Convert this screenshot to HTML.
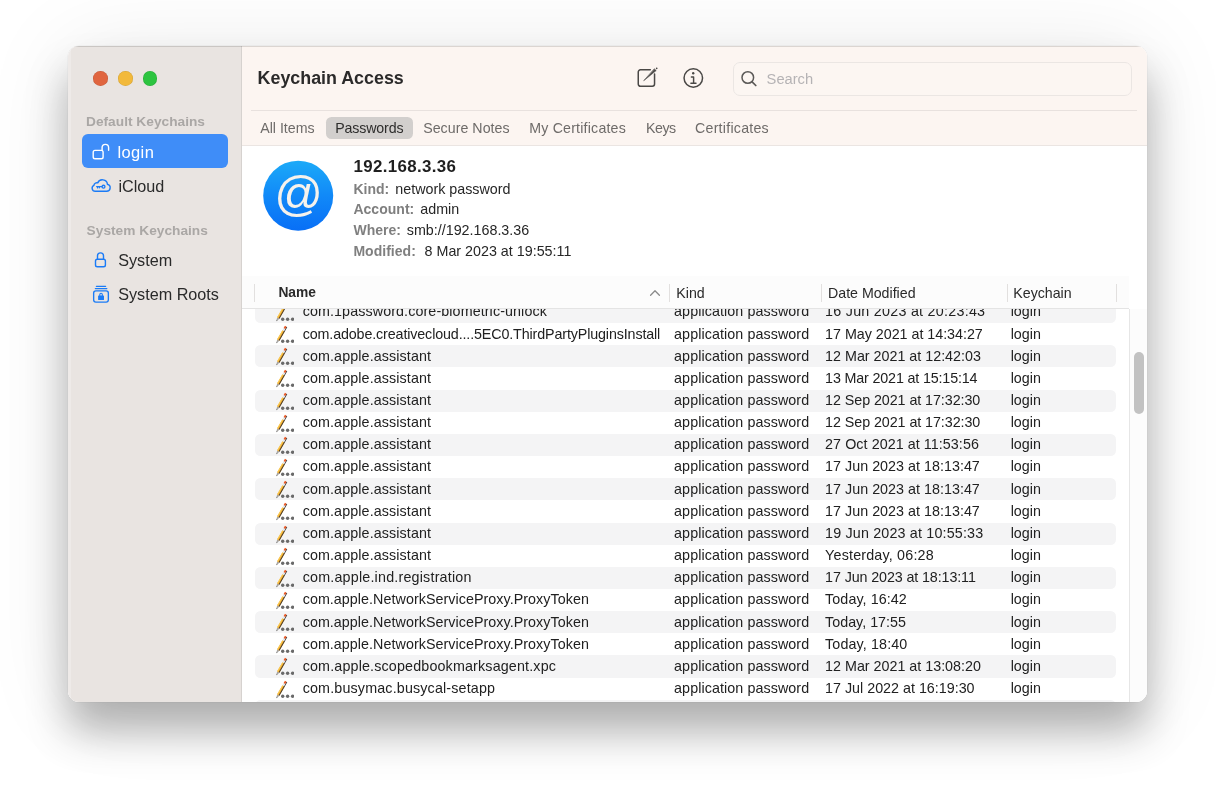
<!DOCTYPE html>
<html lang="en">
<head>
<meta charset="utf-8">
<title>Keychain Access</title>
<style>
html,body{margin:0;padding:0;}
body{width:1216px;height:793px;overflow:hidden;background:#fff;font-family:"Liberation Sans",sans-serif;color:#262626;position:relative;}
.win{position:absolute;left:68px;top:46px;width:1079px;height:656px;border-radius:11px;overflow:hidden;background:#fff;}
.shadow{position:absolute;left:68px;top:46px;width:1079px;height:656px;border-radius:11px;
 box-shadow:0 29px 42px rgba(0,0,0,0.285),0 4px 90px rgba(0,0,0,0.085),0 0 0 0.5px rgba(0,0,0,0.05);}
.pg{will-change:transform;position:absolute;left:-68px;top:-46px;width:1216px;height:793px;}
.abs{position:absolute;white-space:nowrap;line-height:1;}
.sidebar{position:absolute;left:68px;top:46px;width:174px;height:656px;background:#e9e4e1;box-sizing:border-box;border-right:1px solid #d6d2cf;}
.toolbar{position:absolute;left:242px;top:46px;width:905px;height:99.5px;background:#fcf5f1;box-sizing:border-box;border-bottom:1px solid #ebe5e2;}
.tl{position:absolute;width:14.6px;height:14.6px;border-radius:50%;top:71.2px;box-shadow:inset 0 0 0 0.5px rgba(0,0,0,0.12);}
.sechead{font-weight:bold;font-size:13.7px;color:#aaa7a5;letter-spacing:0.02px;}
.sitem{font-size:16.2px;color:#2a2a2a;}
.sel{position:absolute;left:81.5px;top:134px;width:146.5px;height:34px;border-radius:6px;background:#3f8df8;}
.title{font-weight:bold;font-size:17.85px;color:#2b2a2a;}
.tab{font-size:14.2px;color:#6e6b69;}
.pill{position:absolute;left:326.2px;top:117px;width:86.8px;height:21.6px;border-radius:5.5px;background:#d2cfcd;}
.search{position:absolute;left:733px;top:62px;width:399px;height:33.5px;box-sizing:border-box;border:1px solid #ebe6e3;border-radius:7px;background:#fcf6f2;}
.ihead{font-weight:bold;font-size:16.9px;color:#1f1f1f;letter-spacing:0.36px;}
.ilab{font-weight:bold;font-size:14px;color:#7f7f7f;letter-spacing:0.03px;}
.ival{font-size:14.3px;color:#262626;}
.iline{left:353.4px;font-size:14.3px;color:#262626;line-height:18px;height:18px;}
.iline b{display:inline-block;font-weight:bold;font-size:14px;color:#7f7f7f;letter-spacing:0.03px;}
.rows{position:absolute;left:242px;top:309px;width:887px;height:393px;overflow:hidden;}
.rows .in{position:absolute;left:-242px;top:-309px;width:1216px;height:793px;}
.row{position:absolute;left:255px;width:861px;height:22.15px;font-size:14.3px;color:#212121;line-height:22.15px;white-space:nowrap;}
.row.alt{background:#f4f4f5;border-radius:5.5px;}
.row span{position:absolute;top:-0.6px;}
.row .c1{left:47.7px;}
.row .c2{left:419.1px;letter-spacing:0.08px;}
.row .c3{left:570.1px;}
.row .c4{left:755.7px;}
.row .pi{position:absolute;left:18.5px;top:2px;}
.thead{position:absolute;left:242px;top:275.5px;width:887px;height:33.5px;background:#fcfcfc;box-sizing:border-box;border-bottom:1px solid #e4e4e4;}
.th{font-size:14.2px;color:#2a2a2a;}
.vsep{position:absolute;width:1px;top:283.5px;height:18.5px;background:#e2e0df;}
.track{position:absolute;left:1129px;top:309px;width:18px;height:393px;background:#fcfcfc;box-sizing:border-box;border-left:1px solid #e6e6e6;}
.thumb{position:absolute;left:1133.5px;top:351.7px;width:10px;height:62px;border-radius:5px;background:#c2c2c2;}
</style>
</head>
<body>
<svg width="0" height="0" style="position:absolute">
 <defs>
  <g id="pencil">
   <path d="M2.40 18.30 L3.17 14.36 L5.43 15.66 Z" fill="#a8a6a3"/>
   <path d="M2.40 18.30 L2.72 16.75 L3.58 17.25 Z" fill="#555"/>
   <path d="M3.17 14.36 L8.47 5.18 L10.73 6.48 L5.43 15.66 Z" fill="#f5a623"/>
   <path d="M3.17 14.36 L8.47 5.18 L9.30 5.65 L4.00 14.83 Z" fill="#f9cf5a"/>
   <path d="M4.69 15.23 L12.49 1.72 L13.23 2.15 L5.43 15.66 Z" fill="#3a3836"/>
   <path d="M8.47 5.18 L9.67 3.10 L11.19 3.98 L9.99 6.05 Z" fill="#e6e6e6"/>
   <path d="M9.67 3.10 L10.97 0.85 L12.49 1.73 L11.19 3.98 Z" fill="#ea5420"/>
   <circle cx="8.7" cy="16.2" r="1.7" fill="#6a6a6a"/>
   <circle cx="13.6" cy="16.2" r="1.7" fill="#6a6a6a"/>
   <circle cx="18.6" cy="16.2" r="1.7" fill="#6a6a6a"/>
  </g>
 </defs>
</svg>
<div class="shadow"></div>
<div class="win"><div class="pg">
 <div class="sidebar"></div>
 <div class="toolbar"></div>
 <div style="position:absolute;left:68px;top:46px;width:3px;height:656px;background:#eeeae8"></div>
 <div style="position:absolute;left:68px;top:46px;width:1079px;height:1px;background:rgba(0,0,0,0.13)"></div>
 <!-- traffic lights -->
 <div class="tl" style="left:93.2px;background:#e0653f"></div>
 <div class="tl" style="left:118.2px;background:#f2b93b"></div>
 <div class="tl" style="left:142.7px;background:#2dc440"></div>

 <!-- sidebar -->
 <div class="abs sechead" style="left:86px;top:115px">Default Keychains</div>
 <div class="sel"></div>
 <svg class="abs" style="left:90px;top:141px" width="22" height="20" viewBox="0 0 22 20" fill="none" stroke="#fff" stroke-width="1.4" stroke-linecap="round" stroke-linejoin="round">
  <rect x="3.2" y="9.4" width="9.9" height="8.4" rx="1.8"/>
  <path d="M12.1 9.4 V6.6 a3.25 3.25 0 0 1 6.5 0 V9.3"/>
 </svg>
 <div class="abs sitem" style="left:117.4px;top:144px;color:#fff;font-size:16.5px;letter-spacing:0.4px">login</div>
 <svg class="abs" style="left:89px;top:175px" width="24" height="20" viewBox="0 0 24 20" fill="none" stroke="#1b7bf6" stroke-width="1.4" stroke-linecap="round" stroke-linejoin="round">
  <path d="M6.2 16.3 h11.3 a3.6 3.6 0 0 0 0.9 -7.1 a5.0 4.7 0 0 0 -9.7 -1.3 a3 3 0 0 0 -3.8 2.5 a3.1 3.1 0 0 0 1.3 5.9 z"/>
  <circle cx="14.5" cy="11.7" r="1.45" stroke-width="1.3"/>
  <path d="M7.6 11.7 h5.4 M8.6 11.7 v1.3 M10.4 11.7 v1.1" stroke-width="1.2"/>
 </svg>
 <div class="abs sitem" style="left:118.4px;top:177.8px">iCloud</div>
 <div class="abs sechead" style="left:86.6px;top:223.8px">System Keychains</div>
 <svg class="abs" style="left:90px;top:250px" width="20" height="20" viewBox="0 0 20 20" fill="none" stroke="#1b7bf6" stroke-width="1.4" stroke-linecap="round" stroke-linejoin="round">
  <rect x="5.5" y="9.3" width="9.9" height="7.4" rx="1.8"/>
  <path d="M7.5 9.3 V5.9 a3.0 3.0 0 0 1 6.0 0 V9.3"/>
 </svg>
 <div class="abs sitem" style="left:118.2px;top:252.2px">System</div>
 <svg class="abs" style="left:90px;top:284px" width="22" height="22" viewBox="0 0 22 22" fill="none" stroke="#1b7bf6" stroke-width="1.35" stroke-linecap="round" stroke-linejoin="round">
  <path d="M6.4 2.3 h9.2 M5.4 4.6 h11.4"/>
  <rect x="3.65" y="6.85" width="14.7" height="11.2" rx="2.2"/>
  <rect x="8.1" y="11.6" width="5.9" height="4.5" rx="0.6" fill="#1b7bf6" stroke="none"/>
  <path d="M9.8 11.8 v-1.3 a1.25 1.25 0 0 1 2.5 0 V11.8" stroke-width="1.1"/>
 </svg>
 <div class="abs sitem" style="left:118.2px;top:286.1px">System Roots</div>

 <!-- toolbar -->
 <div class="abs title" style="left:257.6px;top:69.6px">Keychain Access</div>
 <svg class="abs" style="left:634px;top:64px" width="28" height="28" viewBox="0 0 28 28" fill="none" stroke="#4a4846" stroke-width="1.5" stroke-linecap="round" stroke-linejoin="round">
  <path d="M16.3 5.8 H6.45 a2.2 2.2 0 0 0 -2.2 2.2 V20.05 a2.2 2.2 0 0 0 2.2 2.2 H18.35 a2.2 2.2 0 0 0 2.2 -2.2 V10"/>
  <path d="M20.5 5.0 L22.2 6.6 L10.0 16.5 Z" fill="#4a4846" stroke-width="0.6"/>
  <circle cx="22.7" cy="4.3" r="0.85" fill="#4a4846" stroke="none"/>
 </svg>
 <svg class="abs" style="left:681px;top:66px" width="24" height="24" viewBox="0 0 24 24" fill="none" stroke="#4a4846" stroke-width="1.5" stroke-linecap="round" stroke-linejoin="round">
  <circle cx="12.3" cy="12" r="9.25"/>
  <circle cx="12.2" cy="7.3" r="1.2" fill="#4a4846" stroke="none"/>
  <path d="M10.4 10.9 h2.2 v6.2 M9.9 17.2 h5.1" stroke-width="1.45"/>
 </svg>
 <div class="search"></div>
 <svg class="abs" style="left:738px;top:68px" width="22" height="22" viewBox="0 0 22 22" fill="none" stroke="#5b5957" stroke-width="1.5" stroke-linecap="round">
  <circle cx="9.8" cy="9.5" r="5.8"/>
  <path d="M14.1 13.8 L17.8 17.5" stroke-width="1.7"/>
 </svg>
 <div class="abs" style="left:766.6px;top:72px;font-size:14.7px;color:#b5b3b5;letter-spacing:0px">Search</div>
 <div style="position:absolute;left:251px;top:110px;width:886px;height:1px;background:#e8e1de"></div>
 <div class="pill"></div>
 <div class="abs tab" style="left:260.2px;top:120.9px">All Items</div>
 <div class="abs tab" style="left:335.3px;top:120.9px;color:#2e2d2c;letter-spacing:-0.15px">Passwords</div>
 <div class="abs tab" style="left:423.2px;top:120.9px;letter-spacing:0.04px">Secure Notes</div>
 <div class="abs tab" style="left:529.2px;top:120.9px;letter-spacing:0.2px">My Certificates</div>
 <div class="abs tab" style="left:646px;top:120.9px;letter-spacing:-0.45px">Keys</div>
 <div class="abs tab" style="left:695px;top:120.9px;letter-spacing:0.25px">Certificates</div>

 <!-- info header -->
 <svg class="abs" style="left:262px;top:160px" width="72" height="72" viewBox="0 0 72 72">
  <defs><linearGradient id="atg" x1="0" y1="0" x2="0" y2="1"><stop offset="0" stop-color="#1caaf8"/><stop offset="0.5" stop-color="#1189f8"/><stop offset="1" stop-color="#086ff6"/></linearGradient></defs>
  <circle cx="36.2" cy="35.7" r="35" fill="url(#atg)"/>
  <text x="36.6" y="50.2" text-anchor="middle" font-family="Liberation Sans, sans-serif" font-size="48" fill="#f6f2ec">@</text>
 </svg>
 <div class="abs ihead" style="left:353.4px;top:158.8px">192.168.3.36</div>
 <div class="abs iline" style="top:180.3px"><b style="width:41.9px">Kind:</b><span>network password</span></div>
 <div class="abs iline" style="top:200.1px"><b style="width:66.9px">Account:</b><span>admin</span></div>
 <div class="abs iline" style="top:221.2px"><b style="width:53.4px">Where:</b><span>smb://192.168.3.36</span></div>
 <div class="abs iline" style="top:241.9px"><b style="width:71.2px">Modified:</b><span>8 Mar 2023 at 19:55:11</span></div>

 <!-- rows -->
 <div class="rows"><div class="in">
<div class="row alt" style="top:301.00px"><svg class="pi" width="20" height="20" viewBox="0 0 20 20"><use href="#pencil"/></svg><span class="c1" style="letter-spacing:0.1px">com.1password.core-biometric-unlock</span><span class="c2">application password</span><span class="c3" style="letter-spacing:0.261px">16 Jun 2023 at 20:23:43</span><span class="c4">login</span></div>
<div class="row" style="top:323.15px"><svg class="pi" width="20" height="20" viewBox="0 0 20 20"><use href="#pencil"/></svg><span class="c1" style="letter-spacing:-0.13px">com.adobe.creativecloud....5EC0.ThirdPartyPluginsInstall</span><span class="c2">application password</span><span class="c3" style="letter-spacing:-0.022px">17 May 2021 at 14:34:27</span><span class="c4">login</span></div>
<div class="row alt" style="top:345.30px"><svg class="pi" width="20" height="20" viewBox="0 0 20 20"><use href="#pencil"/></svg><span class="c1" style="letter-spacing:0.11px">com.apple.assistant</span><span class="c2">application password</span><span class="c3" style="letter-spacing:0.000px">12 Mar 2021 at 12:42:03</span><span class="c4">login</span></div>
<div class="row" style="top:367.45px"><svg class="pi" width="20" height="20" viewBox="0 0 20 20"><use href="#pencil"/></svg><span class="c1" style="letter-spacing:0.11px">com.apple.assistant</span><span class="c2">application password</span><span class="c3" style="letter-spacing:-0.152px">13 Mar 2021 at 15:15:14</span><span class="c4">login</span></div>
<div class="row alt" style="top:389.60px"><svg class="pi" width="20" height="20" viewBox="0 0 20 20"><use href="#pencil"/></svg><span class="c1" style="letter-spacing:0.11px">com.apple.assistant</span><span class="c2">application password</span><span class="c3" style="letter-spacing:-0.065px">12 Sep 2021 at 17:32:30</span><span class="c4">login</span></div>
<div class="row" style="top:411.75px"><svg class="pi" width="20" height="20" viewBox="0 0 20 20"><use href="#pencil"/></svg><span class="c1" style="letter-spacing:0.11px">com.apple.assistant</span><span class="c2">application password</span><span class="c3" style="letter-spacing:-0.065px">12 Sep 2021 at 17:32:30</span><span class="c4">login</span></div>
<div class="row alt" style="top:433.90px"><svg class="pi" width="20" height="20" viewBox="0 0 20 20"><use href="#pencil"/></svg><span class="c1" style="letter-spacing:0.11px">com.apple.assistant</span><span class="c2">application password</span><span class="c3" style="letter-spacing:0.065px">27 Oct 2021 at 11:53:56</span><span class="c4">login</span></div>
<div class="row" style="top:456.05px"><svg class="pi" width="20" height="20" viewBox="0 0 20 20"><use href="#pencil"/></svg><span class="c1" style="letter-spacing:0.11px">com.apple.assistant</span><span class="c2">application password</span><span class="c3" style="letter-spacing:0.022px">17 Jun 2023 at 18:13:47</span><span class="c4">login</span></div>
<div class="row alt" style="top:478.20px"><svg class="pi" width="20" height="20" viewBox="0 0 20 20"><use href="#pencil"/></svg><span class="c1" style="letter-spacing:0.11px">com.apple.assistant</span><span class="c2">application password</span><span class="c3" style="letter-spacing:0.022px">17 Jun 2023 at 18:13:47</span><span class="c4">login</span></div>
<div class="row" style="top:500.35px"><svg class="pi" width="20" height="20" viewBox="0 0 20 20"><use href="#pencil"/></svg><span class="c1" style="letter-spacing:0.11px">com.apple.assistant</span><span class="c2">application password</span><span class="c3" style="letter-spacing:0.022px">17 Jun 2023 at 18:13:47</span><span class="c4">login</span></div>
<div class="row alt" style="top:522.50px"><svg class="pi" width="20" height="20" viewBox="0 0 20 20"><use href="#pencil"/></svg><span class="c1" style="letter-spacing:0.11px">com.apple.assistant</span><span class="c2">application password</span><span class="c3" style="letter-spacing:0.174px">19 Jun 2023 at 10:55:33</span><span class="c4">login</span></div>
<div class="row" style="top:544.65px"><svg class="pi" width="20" height="20" viewBox="0 0 20 20"><use href="#pencil"/></svg><span class="c1" style="letter-spacing:0.11px">com.apple.assistant</span><span class="c2">application password</span><span class="c3" style="letter-spacing:0.188px">Yesterday, 06:28</span><span class="c4">login</span></div>
<div class="row alt" style="top:566.80px"><svg class="pi" width="20" height="20" viewBox="0 0 20 20"><use href="#pencil"/></svg><span class="c1" style="letter-spacing:0.2px">com.apple.ind.registration</span><span class="c2">application password</span><span class="c3" style="letter-spacing:-0.109px">17 Jun 2023 at 18:13:11</span><span class="c4">login</span></div>
<div class="row" style="top:588.95px"><svg class="pi" width="20" height="20" viewBox="0 0 20 20"><use href="#pencil"/></svg><span class="c1" style="letter-spacing:0.05px">com.apple.NetworkServiceProxy.ProxyToken</span><span class="c2">application password</span><span class="c3" style="letter-spacing:0.083px">Today, 16:42</span><span class="c4">login</span></div>
<div class="row alt" style="top:611.10px"><svg class="pi" width="20" height="20" viewBox="0 0 20 20"><use href="#pencil"/></svg><span class="c1" style="letter-spacing:0.05px">com.apple.NetworkServiceProxy.ProxyToken</span><span class="c2">application password</span><span class="c3" style="letter-spacing:0.000px">Today, 17:55</span><span class="c4">login</span></div>
<div class="row" style="top:633.25px"><svg class="pi" width="20" height="20" viewBox="0 0 20 20"><use href="#pencil"/></svg><span class="c1" style="letter-spacing:0.05px">com.apple.NetworkServiceProxy.ProxyToken</span><span class="c2">application password</span><span class="c3" style="letter-spacing:0.125px">Today, 18:40</span><span class="c4">login</span></div>
<div class="row alt" style="top:655.40px"><svg class="pi" width="20" height="20" viewBox="0 0 20 20"><use href="#pencil"/></svg><span class="c1" style="letter-spacing:0.16px">com.apple.scopedbookmarksagent.xpc</span><span class="c2">application password</span><span class="c3" style="letter-spacing:0.000px">12 Mar 2021 at 13:08:20</span><span class="c4">login</span></div>
<div class="row" style="top:677.55px"><svg class="pi" width="20" height="20" viewBox="0 0 20 20"><use href="#pencil"/></svg><span class="c1" style="letter-spacing:0.16px">com.busymac.busycal-setapp</span><span class="c2">application password</span><span class="c3" style="letter-spacing:0.000px">17 Jul 2022 at 16:19:30</span><span class="c4">login</span></div>
<div class="row alt" style="top:699.70px"></div>
 </div></div>
 <div class="track"></div>
 <div class="thumb"></div>

 <!-- table header -->
 <div class="thead"></div>
 <div class="vsep" style="left:254px"></div>
 <div class="vsep" style="left:669px"></div>
 <div class="vsep" style="left:820.5px"></div>
 <div class="vsep" style="left:1006.5px"></div>
 <div class="vsep" style="left:1115.5px"></div>
 <div class="abs th" style="left:278.4px;top:286.1px;font-weight:bold;font-size:13.8px">Name</div>
 <svg class="abs" style="left:648px;top:287px" width="14" height="12" viewBox="0 0 14 12" fill="none" stroke="#8a8a8a" stroke-width="1.3" stroke-linecap="round" stroke-linejoin="round"><path d="M2.6 8.2 L7 3.8 L11.4 8.2"/></svg>
 <div class="abs th" style="left:676.3px;top:285.6px">Kind</div>
 <div class="abs th" style="left:828px;top:285.6px">Date Modified</div>
 <div class="abs th" style="left:1013.3px;top:285.6px">Keychain</div>
</div></div>
</body>
</html>
